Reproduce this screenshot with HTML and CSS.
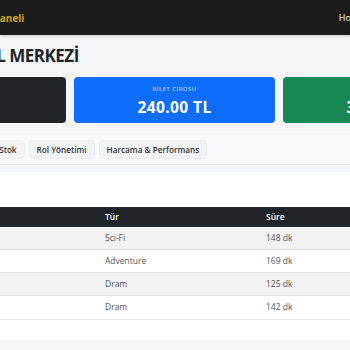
FILE: index.html
```html
<!DOCTYPE html>
<html lang="tr">
<head>
    <meta charset="UTF-8">
    <meta name="viewport" content="width=device-width, initial-scale=1.0">
    <title>Sinema Paneli</title>
    <link rel="stylesheet" href="styles.css">
</head>
<body>
<nav class="navbar">
    <div class="nav-inner">
        <span class="brand">Sinema Paneli</span>
        <span class="nav-user">Hoş geldin, Admin</span>
    </div>
</nav>

<main class="main">
    <h1 class="title">SİNEMA KONTROL MERKEZİ</h1>

    <div class="stats">
        <div class="stat stat-dark">
            <div class="stat-label">TOPLAM FİLM</div>
            <div class="stat-value">4</div>
        </div>
        <div class="stat stat-blue">
            <div class="stat-label">BİLET CİROSU</div>
            <div class="stat-value">240.00 TL</div>
        </div>
        <div class="stat stat-green">
            <div class="stat-label">BÜFE CİROSU</div>
            <div class="stat-value">320.00 TL</div>
        </div>
    </div>

    <div class="tabs">
        <button class="tab">Film Listesi</button>
        <button class="tab">Ürün &amp; Stok</button>
        <button class="tab">Rol Yönetimi</button>
        <button class="tab">Harcama &amp; Performans</button>
    </div>

    <section class="panel">
        <h2 class="panel-title">Film Listesi</h2>
        <table class="table">
            <colgroup>
                <col class="col-name">
                <col class="col-type">
                <col>
            </colgroup>
            <thead>
                <tr><th>Film Adı</th><th>Tür</th><th>Süre</th></tr>
            </thead>
            <tbody>
                <tr><td>Inception</td><td>Sci-Fi</td><td>148 dk</td></tr>
                <tr><td>Interstellar</td><td>Adventure</td><td>169 dk</td></tr>
                <tr><td>Ayla</td><td>Dram</td><td>125 dk</td></tr>
                <tr><td>Forrest Gump</td><td>Dram</td><td>142 dk</td></tr>
            </tbody>
        </table>
    </section>
</main>
</body>
</html>
```

FILE: styles.css
```css
body {
    margin: 0;
    background: #f4f5f7;
    font-family: "Open Sans", sans-serif;
    color: #212529;
    overflow: hidden;
}

.navbar {
    height: 35px;
    background: #1c1c1c;
    box-shadow: 0 1px 3px rgba(0, 0, 0, 0.2);
}

.nav-inner {
    display: flex;
    justify-content: space-between;
    align-items: center;
    height: 100%;
    margin: 0 -65px 0 -46px;
}

.brand {
    color: #d4a20f;
    font-weight: 700;
    font-size: 10px;
}

.nav-user {
    color: #fff;
    font-size: 9px;
}

/* the page is wider than the window, we only see its middle */
.main {
    margin-left: -135px;
    width: 619px;
    padding-top: 10px;
}

.title {
    margin: 0 0 10px -6px;
    font-size: 17px;
    line-height: 22px;
    font-weight: 700;
    letter-spacing: -0.5px;
}

.stats {
    display: grid;
    grid-template-columns: repeat(3, 1fr);
    gap: 8px;
}

.stat {
    height: 46px;
    box-sizing: border-box;
    padding-top: 8px;
    border-radius: 4px;
    color: #fff;
    text-align: center;
}

.stat-dark {
    background: #212529;
}

.stat-blue {
    background: #0d6efd;
}

.stat-green {
    background: #198754;
}

.stat-label {
    font-size: 6px;
    line-height: 8px;
    font-weight: 600;
    letter-spacing: 0.4px;
    opacity: 0.6;
}

.stat-value {
    margin-top: 4px;
    font-size: 15.5px;
    line-height: 20px;
    font-weight: 700;
    letter-spacing: 0.4px;
}

.tabs {
    display: flex;
    gap: 4px;
    margin-top: 12px;
    padding: 5px 5px 5px 32px;
    background: #f8f9fa;
    border-bottom: 1px solid #e6e8eb;
}

.tab {
    font-family: "Open Sans", sans-serif;
    font-size: 8.2px;
    line-height: 11px;
    font-weight: 600;
    color: #333;
    background: #f1f3f5;
    border: 1px solid #eaecef;
    border-radius: 4px;
    padding: 3px 7px;
}

.panel {
    margin-top: 7px;
    padding: 16px 16px 19px;
    background: #fff;
    box-shadow: 0 2px 4px rgba(0, 0, 0, 0.08);
}

.panel-title {
    margin: 0;
    font-size: 13px;
    line-height: 19px;
}

.table {
    width: 100%;
    border-collapse: collapse;
    table-layout: fixed;
    font-size: 8.5px;
}

.col-name {
    width: 216px;
}

.col-type {
    width: 161px;
}

.table th {
    background: #212529;
    color: #fff;
    font-weight: 600;
    text-align: left;
    padding: 5px 8px;
    line-height: 9.5px;
}

.table td {
    padding: 6px 8px;
    line-height: 10.33px;
    color: #555;
    border-bottom: 1px solid #e3e5e8;
}

.table tbody tr:nth-child(odd) td {
    background: #f2f2f2;
}
```
